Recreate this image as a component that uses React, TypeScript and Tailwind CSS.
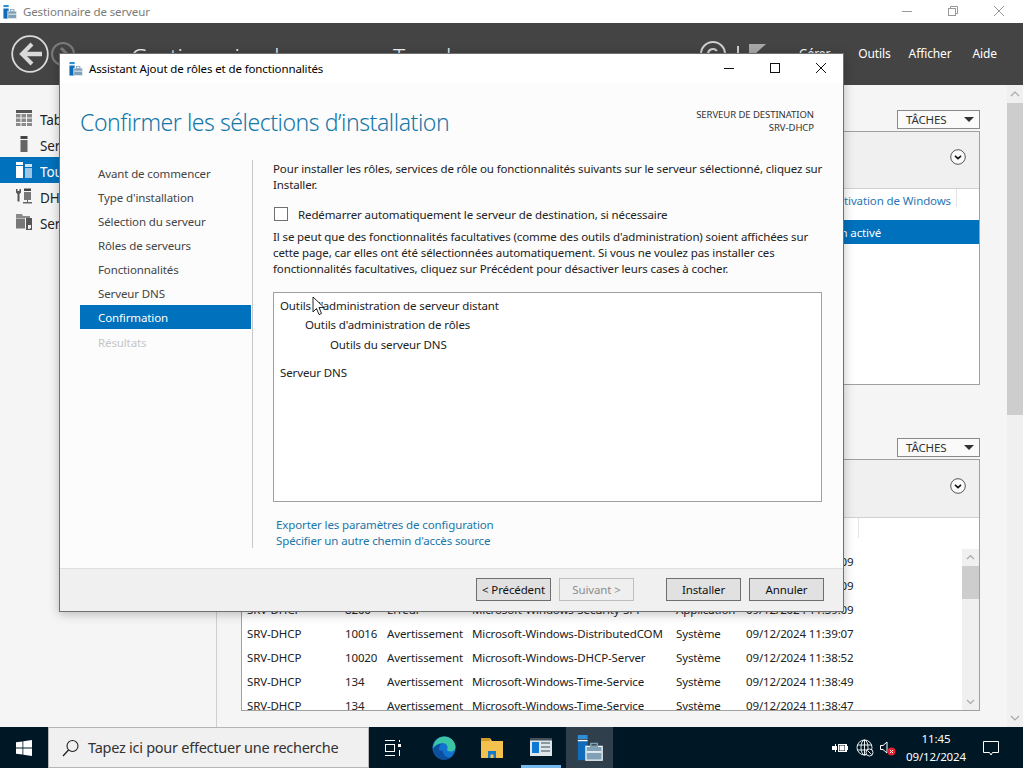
import React from 'react';

const rows = [
  ['SRV-DHCP', '8200', 'Erreur', 'Microsoft-Windows-Security-SPP', 'Application', '09/12/2024 11:39:09'],
  ['SRV-DHCP', '8200', 'Erreur', 'Microsoft-Windows-Security-SPP', 'Application', '09/12/2024 11:39:09'],
  ['SRV-DHCP', '8200', 'Erreur', 'Microsoft-Windows-Security-SPP', 'Application', '09/12/2024 11:39:09'],
  ['SRV-DHCP', '10016', 'Avertissement', 'Microsoft-Windows-DistributedCOM', 'Système', '09/12/2024 11:39:07'],
  ['SRV-DHCP', '10020', 'Avertissement', 'Microsoft-Windows-DHCP-Server', 'Système', '09/12/2024 11:38:52'],
  ['SRV-DHCP', '134', 'Avertissement', 'Microsoft-Windows-Time-Service', 'Système', '09/12/2024 11:38:49'],
  ['SRV-DHCP', '134', 'Avertissement', 'Microsoft-Windows-Time-Service', 'Système', '09/12/2024 11:38:47'],
];

const steps = ['Avant de commencer', "Type d'installation", 'Sélection du serveur', 'Rôles de serveurs', 'Fonctionnalités', 'Serveur DNS'];

function ServerIcon({ size = 16 }: { size?: number }) {
  return (
    <svg width={size} height={size} viewBox="0 0 16 16" className="shrink-0">
      <rect x="0.5" y="0" width="6" height="2.5" fill="#2d8fd5" />
      <rect x="0.5" y="3" width="6" height="1" fill="#ffffff" />
      <rect x="0.5" y="4" width="6" height="11.5" fill="#0f6cbd" />
      <rect x="5.5" y="7" width="10" height="8.5" fill="#7fa0b5" stroke="#f0f5f8" strokeWidth="0.8" />
      <rect x="8.5" y="5.2" width="4" height="2" fill="none" stroke="#7fa0b5" strokeWidth="0.9" />
      <rect x="6" y="10" width="9" height="0.9" fill="#ffffff" />
    </svg>
  );
}

function Cheveron() {
  return (
    <svg width="16" height="16" viewBox="0 0 16 16">
      <circle cx="8" cy="8" r="7.3" fill="#fafafa" stroke="#444444" strokeWidth="0.9" />
      <path d="M5 6.8 L8 9.6 L11 6.8" fill="none" stroke="#111111" strokeWidth="1.6" />
    </svg>
  );
}

function TasksButton() {
  return (
    <div className="ml-auto flex h-[19px] w-[83px] items-center justify-between border border-[#8a8a8a] bg-[#fafafa] pl-[8px] pr-[5px] text-[11.5px] text-[#333]">
      <span className="pt-[1px]">TÂCHES</span>
      <span className="h-0 w-0 border-x-[5px] border-t-[5px] border-x-transparent border-t-[#333]" />
    </div>
  );
}

function WizardButton({ label, disabled, className }: { label: string; disabled?: boolean; className?: string }) {
  return (
    <div
      className={`flex h-[23px] w-[75px] items-center justify-center border pt-[1px] text-[11.5px] ${
        disabled ? 'border-[#bfbfbf] bg-[#efefef] text-[#8c8c8c]' : 'border-[#6e6e6e] bg-[#e1e1e1] text-[#111]'
      } ${className ?? ''}`}
    >
      {label}
    </div>
  );
}

function Sidebar() {
  const items = [
    { label: 'Tableau de bord', icon: <svg width="16" height="16" viewBox="0 0 16 16"><rect width="16" height="3" fill="#555" /><path d="M0 4h4.500v3.500H0zM5.500 4H10v3.500H5.500zM11 4h5v3.500h-5zM0 8.500h4.500V12H0zM5.500 8.500H10V12H5.500zM11 8.500h5V12h-5zM0 13h4.500v3H0zM5.500 13H10v3H5.500zM11 13h5v3h-5z" fill="#8a8a8a" /></svg> },
    { label: 'Serveur local', icon: <svg width="16" height="16" viewBox="0 0 16 16"><rect x="4.500" y="0" width="7" height="3" fill="#444" /><rect x="4.500" y="4" width="7" height="12" fill="#666" /></svg> },
    { label: 'Tous les serveurs', active: true, icon: <svg width="16" height="16" viewBox="0 0 16 16"><rect x="0" y="0" width="7" height="3" fill="#fff" /><rect x="0" y="4" width="7" height="12" fill="#fff" /><rect x="9" y="2" width="7" height="3" fill="#cfe4f3" /><rect x="9" y="6" width="7" height="10" fill="#9cc6e4" /></svg> },
    { label: 'DHCP', icon: <svg width="16" height="16" viewBox="0 0 16 16"><path d="M0 1h1.500v2h2V1H5v3.500L3.500 6v7.500h-2V6L0 4.500z" fill="#555" /><rect x="8" y="0.500" width="7" height="2.500" fill="#444" /><rect x="8" y="4" width="7" height="8" fill="#777" /><rect x="11" y="12" width="1" height="2" fill="#666" /><rect x="7" y="14" width="9" height="1.500" fill="#666" /></svg> },
    { label: 'Services de fichiers', icon: <svg width="16" height="16" viewBox="0 0 16 16"><path d="M0 0h6l1 2h7v2H0z" fill="#8a8a8a" /><rect x="0" y="4.500" width="9" height="10" fill="#777" /><rect x="10" y="4" width="6" height="12" fill="#555" /><path d="M12 11h3v3l-1.500 1H12z" fill="#eee" /></svg> },
  ];
  return (
    <aside className="flex w-[217px] shrink-0 flex-col border-r border-[#cfcfcf] bg-[#f5f5f5] pt-[20px]">
      {items.map(item => (
        <div
          key={item.label}
          className={`flex h-[26px] items-center gap-[8px] pl-[16px] text-[13.5px] ${item.active ? 'bg-[#0071bc] text-white' : 'text-[#222]'}`}
        >
          {item.icon}
          <span className="whitespace-nowrap pt-[5px]">{item.label}</span>
        </div>
      ))}
    </aside>
  );
}

function Content() {
  return (
    <main className="flex min-w-0 flex-1 flex-col bg-[#f5f5f5] pl-[24px] pr-[27px] pt-[25px]">
      <TasksButton />
      <section className="mt-[2px] flex h-[254px] flex-col border border-[#a0a0a0] bg-white">
        <div className="flex h-[57px] justify-end border-b border-[#d0d0d0] bg-[#f0f0f0] pr-[13px] pt-[17px]">
          <Cheveron />
        </div>
        <div className="flex h-[31px] justify-end pr-[22px] text-[11.5px] text-[#2a76b5]">
          <span className="h-[18px] whitespace-nowrap border-r border-[#e4e4e4] pr-[5px] pt-[3px]">Licence · Activation de Windows</span>
        </div>
        <div className="flex h-[24px] items-center bg-[#0071bc] pl-[583px] pt-[2px] text-[11.5px] text-white">
          <span className="whitespace-nowrap">Non activé</span>
        </div>
      </section>
      <div className="mt-[53px]">
        <TasksButton />
      </div>
      <section className="mt-[2px] flex h-[252px] flex-col border border-[#a0a0a0] bg-white">
        <div className="flex h-[58px] shrink-0 justify-end border-b border-[#d0d0d0] bg-[#f0f0f0] pr-[13px] pt-[18px]">
          <Cheveron />
        </div>
        <div className="flex min-h-0 flex-1 overflow-hidden">
          <div className="min-w-0 flex-1">
            <div className="ml-[616px] h-[20px] w-px bg-[#e4e4e4]" />
            <div className="mt-[11px] text-[11.5px] text-[#222]">
              {rows.map((row, i) => (
                <div key={i} className="flex h-[24px] items-center whitespace-nowrap pl-[5px] pt-[1px]">
                  <span className="w-[98px]">{row[0]}</span>
                  <span className="w-[42px]">{row[1]}</span>
                  <span className="w-[85px]">{row[2]}</span>
                  <span className="w-[204px]">{row[3]}</span>
                  <span className="w-[70px]">{row[4]}</span>
                  <span>{row[5]}</span>
                </div>
              ))}
            </div>
          </div>
          <div className="mt-[31px] flex h-[161px] w-[17px] shrink-0 flex-col bg-[#f0f0f0]">
            <svg width="17" height="17" viewBox="0 0 17 17"><path d="M5 10l3.500-3.500L12 10" fill="none" stroke="#a8a8a8" strokeWidth="1.200" /></svg>
            <div className="h-[33px] bg-[#cdcdcd]" />
            <div className="flex-1" />
            <svg width="17" height="17" viewBox="0 0 17 17"><path d="M5 7l3.500 3.500L12 7" fill="none" stroke="#a8a8a8" strokeWidth="1.200" /></svg>
          </div>
        </div>
      </section>
    </main>
  );
}

function Dialog() {
  return (
    <div className="absolute left-[59px] top-[53px] flex h-[559px] w-[785px] flex-col border border-[#707070] bg-[#fcfcfc] text-[11.5px] text-[#222] shadow-[0_2px_10px_rgba(0,0,0,0.25)]">
      <div className="flex h-[29px] shrink-0 items-center bg-white pl-[9px]">
        <ServerIcon size={14} />
        <span className="ml-[6px] text-[11.5px] text-black">Assistant Ajout de rôles et de fonctionnalités</span>
        <div className="ml-auto flex items-center gap-[32px] pb-[2px] pr-[15px]">
          <svg width="14" height="14" viewBox="0 0 14 14"><path d="M2 7.500h10" stroke="#111" /></svg>
          <svg width="14" height="14" viewBox="0 0 14 14"><rect x="2.500" y="2.500" width="9" height="9" fill="none" stroke="#111" /></svg>
          <svg width="14" height="14" viewBox="0 0 14 14"><path d="M2 2l10 10M12 2L2 12" stroke="#111" /></svg>
        </div>
      </div>
      <div className="flex h-[77px] shrink-0 items-start justify-between pl-[20px] pr-[29px]">
        <h1 className="mt-[21px] text-[23px] font-light leading-[36px] tracking-[-0.45px] text-[#1477a8]">Confirmer les sélections d’installation</h1>
        <div className="mt-[25px] text-right text-[9.5px] leading-[13px] tracking-[-0.06px] text-[#333]">
          <div>SERVEUR DE DESTINATION</div>
          <div>SRV-DHCP</div>
        </div>
      </div>
      <div className="flex min-h-0 flex-1 pl-[20px]">
        <nav className="w-[171px] shrink-0 pt-[1px] text-[#444]">
          {steps.map(step => (
            <div key={step} className="flex h-[24px] items-center pl-[18px] pt-[1px]">{step}</div>
          ))}
          <div className="flex h-[24px] items-center bg-[#0071bc] pl-[18px] pt-[1px] text-white">Confirmation</div>
          <div className="flex h-[26px] items-center pl-[18px] pt-[1px] text-[#c6c6c6]">Résultats</div>
        </nav>
        <div className="mb-[20px] ml-[1px] flex-1 border-l border-[#c8c8c8] pl-[20px] pr-[22px] pt-[1px]">
          <p className="whitespace-nowrap leading-[16px]">
            Pour installer les rôles, services de rôle ou fonctionnalités suivants sur le serveur sélectionné, cliquez sur
            <br />
            Installer.
          </p>
          <label className="mt-[13px] flex h-[16px] items-center">
            <span className="ml-[1px] h-[14px] w-[14px] border border-[#707070] bg-white" />
            <span className="ml-[10px] pt-[1px]">Redémarrer automatiquement le serveur de destination, si nécessaire</span>
          </label>
          <p className="mt-[7px] whitespace-nowrap leading-[16px]">
            Il se peut que des fonctionnalités facultatives (comme des outils d'administration) soient affichées sur
            <br />
            cette page, car elles ont été sélectionnées automatiquement. Si vous ne voulez pas installer ces
            <br />
            fonctionnalités facultatives, cliquez sur Précédent pour désactiver leurs cases à cocher.
          </p>
          <div className="mt-[15px] h-[210px] border border-[#a0a0a0] bg-white pl-[6px] pt-[4px] text-[#222]">
            <div className="leading-[18px]">Outils d'administration de serveur distant</div>
            <div className="pl-[25px] leading-[19px]">Outils d'administration de rôles</div>
            <div className="mt-[1px] pl-[50px] leading-[19px]">Outils du serveur DNS</div>
            <div className="mt-[10px] leading-[18px]">Serveur DNS</div>
          </div>
          <div className="mt-[15px] pl-[3px] leading-[16px] text-[#1a76a8]">
            <div>Exporter les paramètres de configuration</div>
            <div>Spécifier un autre chemin d'accès source</div>
          </div>
        </div>
      </div>
      <div className="flex h-[43px] shrink-0 items-start border-t border-[#dfdfdf] bg-[#f0f0f0] pl-[416px] pt-[9px]">
        <WizardButton label="< Précédent" />
        <WizardButton label="Suivant >" disabled className="ml-[8px]" />
        <WizardButton label="Installer" className="ml-[32px]" />
        <WizardButton label="Annuler" className="ml-[8px]" />
      </div>
    </div>
  );
}

function Taskbar() {
  return (
    <footer className="flex h-[41px] shrink-0 items-stretch bg-[#001826]">
      <div className="flex w-[48px] items-center justify-center">
        <svg width="16" height="16" viewBox="0 0 16 16"><path d="M0 2.300l6.500-.9v6.200H0zM7.300 1.300L16 0v7.600H7.300zM0 8.400h6.500v6.200L0 13.700zM7.300 8.400H16V16l-8.700-1.300z" fill="#fff" /></svg>
      </div>
      <div className="flex w-[321px] items-center border border-[#b5b5b5] bg-[#f0f0f0] pl-[12px]">
        <svg width="20" height="20" viewBox="0 0 20 20"><circle cx="11.500" cy="8" r="5.500" fill="none" stroke="#222" strokeWidth="1.100" /><path d="M7.500 12L2 18" stroke="#222" strokeWidth="1.300" /></svg>
        <span className="ml-[7px] whitespace-nowrap pt-[1px] text-[14.5px] tracking-[-0.26px] text-[#333]">Tapez ici pour effectuer une recherche</span>
      </div>
      <div className="flex w-[47px] items-center justify-center">
        <svg width="18" height="18" viewBox="0 0 18 18" fill="none" stroke="#fff"><path d="M1 1.500h10M1 16.500h10" /><rect x="1.500" y="5.500" width="9" height="7" /><rect x="14" y="5" width="3" height="3" fill="#fff" stroke="none" /><path d="M15.500 1v2M15.500 11v6" /></svg>
      </div>
      <div className="flex w-[55px] items-center justify-center">
        <svg width="24" height="24" viewBox="0 0 24 24">
          <circle cx="12" cy="12" r="11.500" fill="#1273cf" />
          <path d="M1 13C1 5 7 .5 12.500.5 19 .5 23.500 6 23.500 11c0 3-2.500 4.500-5 4.500-2 0-3.500-.8-3.500-2 2-3-1-7-5.500-6.500C5 8 2 10 1 13z" fill="#3ac6a5" />
          <path d="M11 15c0 4 3 6.500 7 6.500-3 2.500-8 3-12 .5-3-2-5-6-5-9 1.500-3 4.500-5 8-5-1.500 1.500-2 4-2 6" fill="#0c4f9e" />
        </svg>
      </div>
      <div className="flex w-[41px] items-center justify-center">
        <svg width="22" height="20" viewBox="0 0 22 20"><path d="M0 0h9l2 3h11v17H0z" fill="#f2c14e" /><rect x="0" y="0" width="9" height="3" fill="#d39a25" /><path d="M7 20v-7h8v7h-2.500v-3.500h-3V20z" fill="#1479c9" /></svg>
      </div>
      <div className="ml-[9px] flex w-[40px] items-center justify-center border-b-[3px] border-[#76b9ed] pt-[2px]">
        <svg width="22" height="18" viewBox="0 0 22 18"><rect width="22" height="18" fill="#dfe5e9" /><rect x="2" y="4" width="7" height="11" fill="#0f78d4" /><path d="M11 4h9v2h-9zM11 8h9v2h-9zM11 12h9v2h-9z" fill="#8a98a2" /><rect width="22" height="2.500" fill="#44525c" /></svg>
      </div>
      <div className="ml-[5px] flex w-[47px] items-center justify-center bg-[#2f3f4b]">
        <ServerIcon size={26} />
      </div>
      <div className="ml-auto flex items-center">
        <svg width="16" height="12" viewBox="0 0 16 12" fill="#fff"><path d="M0 4h3V2h1v2h1v4H4v2H3V8H0zM6 2h9v2h1v4h-1v2H6z" /><rect x="7" y="3" width="6" height="6" fill="#001826" /><rect x="7.500" y="3.500" width="5" height="5" fill="#fff" /></svg>
        <svg className="ml-[8px]" width="18" height="18" viewBox="0 0 18 18" fill="none" stroke="#fff" strokeWidth="0.900"><circle cx="8.500" cy="8.500" r="7.500" /><ellipse cx="8.500" cy="8.500" rx="3.500" ry="7.500" /><path d="M1 6h15M1 11h15M8.500 1v15" /><circle cx="13.500" cy="13.500" r="3.500" fill="#001826" /><path d="M11.500 11.500l4 4" /></svg>
        <svg className="ml-[6px]" width="16" height="16" viewBox="0 0 16 16"><path d="M0.500 5.500h2.500L7 2v11L3 9.500H0.500z" fill="none" stroke="#fff" /><circle cx="11.500" cy="11.500" r="4" fill="#e8212e" /><path d="M10 10l3 3M13 10l-3 3" stroke="#fff" /></svg>
        <div className="flex w-[80px] flex-col items-center text-[11.5px] leading-[18px] text-white">
          <span>11:45</span>
          <span>09/12/2024</span>
        </div>
        <div className="flex w-[47px] items-center justify-center pr-[17px]">
          <svg width="16" height="16" viewBox="0 0 16 16"><path d="M0.500 1.500h15v11H9.500L8 15l-1.500-2.500H.5z" fill="none" stroke="#fff" /></svg>
        </div>
      </div>
    </footer>
  );
}

export default function App() {
  return (
    <div className="relative flex h-[768px] w-[1023px] flex-col overflow-hidden bg-white font-['Noto_Sans',sans-serif] tracking-[-0.12px]">
      {/* Title bar */}
      <div className="flex h-[23px] shrink-0 items-center bg-white pl-[3px]">
        <ServerIcon size={14} />
        <span className="ml-[6px] text-[11.5px] text-[#7a7a7a]">Gestionnaire de serveur</span>
        <div className="ml-auto flex items-center gap-[34px] pb-[2px] pr-[18px]">
          <svg width="12" height="12" viewBox="0 0 12 12"><path d="M1 6.500h10" stroke="#999" /></svg>
          <svg width="12" height="12" viewBox="0 0 12 12" fill="none" stroke="#999"><rect x="1.500" y="3.500" width="7" height="7" /><path d="M3.500 3.500v-2h7v7h-2" /></svg>
          <svg width="12" height="12" viewBox="0 0 12 12"><path d="M1 1l10 10M11 1L1 11" stroke="#999" /></svg>
        </div>
      </div>

      {/* Header band */}
      <header className="flex h-[62px] shrink-0 items-center bg-[#444444] pl-[11px] pr-[26px] text-white">
        <svg width="38" height="38" viewBox="0 0 38 38" fill="none"><circle cx="19" cy="19" r="17.800" stroke="#d9d9d9" strokeWidth="1.800" /><path d="M21 9L11 19l10 10" stroke="#d9d9d9" strokeWidth="4" /><path d="M12 19h19" stroke="#d9d9d9" strokeWidth="4.500" /></svg>
        <svg className="ml-[2px]" width="24" height="24" viewBox="0 0 24 24" fill="none"><circle cx="12" cy="12" r="11" stroke="#7b7b7b" strokeWidth="2" /><path d="M10 6l6 6-6 6" stroke="#7b7b7b" strokeWidth="3" /></svg>
        <span className="ml-[7px] h-[2px] w-[10px] bg-[#bbb]" />
        <span className="ml-[39px] whitespace-nowrap pt-[6px] text-[23px] font-light tracking-[-0.35px] text-[#f0f0f0]">Gestionnaire de serveur • Tous les serveurs</span>
        <div className="ml-auto flex items-center text-[12px]">
          <svg width="28" height="28" viewBox="0 0 28 28" fill="none" stroke="#d0d0d0" strokeWidth="2"><circle cx="14" cy="14" r="12" /><path d="M9 14a5 5 0 0 1 9-3M19 14a5 5 0 0 1-9 3" /></svg>
          <span className="ml-[10px] h-[16px] w-[2px] bg-[#d0d0d0]" />
          <svg className="ml-[10px]" width="18" height="20" viewBox="0 0 18 20"><path d="M0 0h17L4 12v8H0z" fill="#a8a8a8" /></svg>
          <span className="ml-[32px]">Gérer</span>
          <span className="ml-[28px]">Outils</span>
          <span className="ml-[18px]">Afficher</span>
          <span className="ml-[21px]">Aide</span>
        </div>
      </header>

      {/* Main */}
      <div className="flex min-h-0 flex-1">
        <Sidebar />
        <Content />
        <div className="flex w-[16px] shrink-0 flex-col bg-[#f0f0f0]">
          <svg width="16" height="18" viewBox="0 0 16 18"><path d="M4 11l4-4 4 4" fill="none" stroke="#a8a8a8" strokeWidth="1.200" /></svg>
          <div className="h-[312px] bg-[#cdcdcd]" />
          <div className="flex-1" />
          <svg width="16" height="18" viewBox="0 0 16 18"><path d="M4 7l4 4 4-4" fill="none" stroke="#a8a8a8" strokeWidth="1.200" /></svg>
        </div>
      </div>

      <Taskbar />
      <Dialog />

      {/* Mouse pointer */}
      <svg className="absolute left-[312px] top-[296px]" width="13" height="20" viewBox="0 0 13 20">
        <path d="M1 1v15l3.500-3.500 2.500 6 2.500-1-2.500-6H12z" fill="#fff" stroke="#111" strokeWidth="0.900" />
      </svg>
    </div>
  );
}
